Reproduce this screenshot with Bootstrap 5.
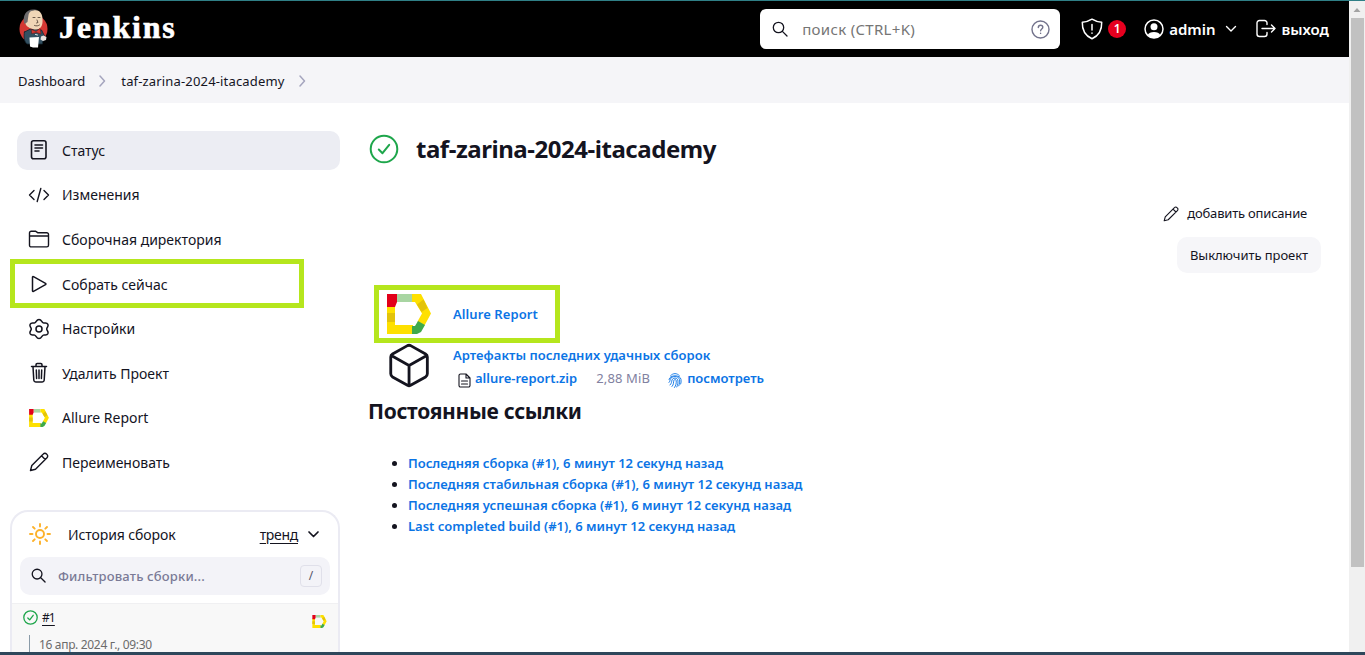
<!DOCTYPE html>
<html lang="ru">
<head>
<meta charset="utf-8">
<meta name="viewport" content="width=device-width, initial-scale=1">
<title>taf-zarina-2024-itacademy [Jenkins]</title>
<link href="https://cdn.jsdelivr.net/npm/bootstrap@5.3.0/dist/css/bootstrap.min.css" rel="stylesheet">
<style>
body{font-family:"Noto Sans","Open Sans",sans-serif;font-size:14px;line-height:21px;color:#14141f;background:#fff}
svg{display:block;flex:none;fill:none;stroke:currentColor;stroke-linecap:round;stroke-linejoin:round}
svg.flat{stroke:none}
.tone-green{color:#1ea64b}
.tone-sun{color:#fdb22b}
.tone-muted{color:#73738c}
.tone-pale{color:#a5a5be}
.tone-link{color:#0b74e5}
a{color:#0b74e5;text-decoration:none}
.shell{height:655px;border-top:1px solid #2f7f86;border-bottom:3px solid #2e475b}
.topbar{height:56px;background:#000;color:#fff;padding:0 20px 0 18px}
.brand{font-family:"Liberation Serif",serif;font-weight:700;font-size:32px;line-height:40px;letter-spacing:1.8px;-webkit-text-stroke:.6px #fff;margin:-4px 0 0 9px}
.searchbox{width:300px;height:40px;border-radius:6px;background:#fff;padding:0 10px 0 12px;color:#14141f}
.searchbox .hint{font-size:15px;letter-spacing:.32px;color:#757575;margin-left:14px}
.top-item{font-size:15px;font-weight:600}
.avatar{margin:0 4px 0 15px}
.caret{margin:0 15px 0 7px}
.alarm{width:18px;height:18px;border-radius:9px;background:#e6001f;font-size:12px;line-height:18px;font-weight:600}
.crumbs{height:46px;background:#f5f5f8;padding:2px 0 0 18px;font-size:13px}
.crumb-job{letter-spacing:.16px}
.side{width:340px;padding-top:28px}
.task{height:38.6px;margin:0 0 6px 17px;padding-left:11px;border-radius:10px}
.task.current{background:#ecedf3}
.task svg{margin-right:12px}
.marked::after{content:"";position:absolute;border:5px solid #b5e61d}
.build-now::after{left:-7px;top:-6px;width:294px;height:49px}
.history{margin:28px 0 0 10px;width:330px;height:160px;border:2px solid #ebebf3;border-bottom:0;border-radius:18px 18px 0 0}
.history-head{height:45px;padding:0 18px 0 17px}
.history-title{margin-left:17px;letter-spacing:-.1px}
.trend{letter-spacing:-.3px;color:#14141f;text-decoration:underline;text-underline-offset:3px}
.filter{height:38px;margin:0 8px;border-radius:10px;background:#f3f3f8;padding:0 8px 0 11px}
.filter-hint{color:#7a7a96;font-weight:500;font-size:13px;letter-spacing:.17px;padding-top:2px}
.slash{width:22px;height:22px;border:1px solid #e0e0ea;border-radius:4px;font-size:12px;line-height:20px;color:#555568}
.builds{margin-top:8px;height:80px;padding:3px 11px 0 11px;background:#f8f8f8;border-top:1px solid #f0f0f2;font-size:12px}
.build-no{letter-spacing:-.9px;color:#14141f;text-decoration:underline;text-underline-offset:3px}
.when{border-left:1px solid #8a9ba8;margin:7px 0 0 6px;padding:3px 0 20px 9px;line-height:14px;color:#6b6b6b;letter-spacing:-.33px}
.content-pane{padding:28px 28px 0 28px}
h1{font-size:24px;letter-spacing:-.46px;font-weight:700;line-height:36px}
h2{font-size:21px;letter-spacing:-.32px;font-weight:700;line-height:28px;margin-top:6px}
.quiet{font-size:13px;letter-spacing:-.2px}
.describe{margin:36px 14px 0 0}
.off{height:36px;margin-top:13px;border-radius:10px;background:#f6f6f9;padding:0 13px;line-height:36px;letter-spacing:-.06px}
.links,.perma{font-size:13px;font-weight:600}
.report{height:58px;width:186px;margin:12px 0 0 6px;padding-left:13px}
.report::after{inset:0}
.report svg{margin-right:22px}
.report a{letter-spacing:.08px}
.cube{margin:0 22px 0 17px}
.artifact-title{letter-spacing:.05px;margin:1px 0 2px}
.perma{padding-left:40px;margin:28px 0 0}
.size{font-weight:400;color:#8181a0;letter-spacing:.15px;margin:0 18px 0 19px}
.look{margin-left:5px}
.bar{width:16px;background:#f0f0f0}
.bar svg{color:#a3a3a3}
.thumb{width:13px;height:549px;background:#c1c1c1;margin-left:2px}
</style>
<script src="https://cdn.jsdelivr.net/npm/bootstrap@5.3.0/dist/js/bootstrap.bundle.min.js"></script>
</head>
<body class="overflow-hidden">
<svg width="0" height="0" class="d-none">
  <symbol id="allure" viewBox="0 0 44 40">
    <g stroke="none">
      <path fill="#fee000" d="M0 10h8v21h18v9H0z"/>
      <path fill="#a8d5a2" d="M10 0h15v8H10z"/>
      <path fill="#e2001a" d="M0 0h10v8L8 13H0z"/>
      <path fill="#fee000" d="M25 0h9l10 19.500-6.500 12-7-4L35 19.500 28 8h-3z"/>
      <path fill="#e3c30a" d="M0 19h8v9H0zM36.500 5.500l4 8.500-6 4-4.500-7.500z"/>
      <path fill="#3eaa4a" d="M31 27l7 4-4 7-4 2h-5v-8h3z"/>
    </g>
  </symbol>
  <symbol id="pencil" viewBox="0 0 20 20">
    <path stroke-width="1.400" d="M1.500 18.500l1.300-5L14.300 2a2.200 2.200 0 0 1 3.200 0l.5.500a2.200 2.200 0 0 1 0 3.200L6.500 17.200zM12.500 3.800l3.700 3.700"/>
  </symbol>
  <symbol id="glass" viewBox="0 0 16 16"><circle cx="6.500" cy="6.500" r="5.200"/><path d="M10.400 10.400L15 15"/></symbol>
</svg>
<div class="shell d-flex overflow-hidden">
  <div class="flex-grow-1 overflow-hidden">
    <header class="topbar d-flex align-items-center">
      <svg class="flat" width="32" height="42" viewBox="0 0 32 42">
        <circle cx="15.500" cy="21" r="14" fill="#d33833"/>
        <path d="M6.500 24l6-3 11 1 4 8-3 4v2H9c-3-3-3.500-7-2.500-12z" fill="#335061" stroke="#12232e" stroke-width=".8"/>
        <path d="M7.500 13c0-8 4-11 9.500-11 5 0 7.500 4 7.500 9 .5 6-1.500 10.500-6.500 10.500-4 0-9.500-2.500-10.500-5.500z" fill="#f0d6b7"/>
        <path d="M6.500 16C4 8 8 1.500 15 1.500c2.500 0 4 .3 5 1-4.500-.5-8.500 0-9.500 4.500L9.500 14z" fill="#6d6b6d"/>
        <path d="M15 9.500h2M20 9.500h2M19 12l1 2.500-1.500.5M16.500 17.500c2 .8 4 .3 5-.5" stroke="#49392f" stroke-width=".8"/>
        <path d="M13.500 21.500l4.500 2L22 20.500l1 5.500-4.500-1.500-4.500 1z" fill="#d33833" stroke="#6e1210" stroke-width=".5"/>
        <path d="M11.500 29.500l9.500-.5-1 10.500H15l-3-1z" fill="#fff"/>
        <path d="M23 28.500l2.500-1 3 1.500-.5 3-3 1-2.500-1.500z" fill="#e9e3dd"/>
        <path d="M17.500 26.500l2 .5" stroke="#dfe6ea" stroke-width="1"/>
      </svg>
      <div class="brand">Jenkins</div>
      <div class="searchbox d-flex align-items-center ms-auto">
        <svg width="16" height="16" stroke-width="1.300"><use href="#glass"/></svg>
        <span class="hint flex-grow-1">поиск (CTRL+K)</span>
        <svg class="tone-muted" width="19" height="19" viewBox="0 0 19 19" stroke-width="1.400"><circle cx="9.500" cy="9.500" r="8.500"/><path d="M7.300 7.500c0-3 4.500-2.800 4.500-.2 0 1.700-2.200 1.700-2.200 3.500M9.600 13.200v.2"/></svg>
      </div>
      <div class="top-item d-flex align-items-center flex-shrink-0">
        <svg class="ms-3" width="32" height="22" viewBox="0 0 32 22" stroke-width="1.500"><path d="M16 1.200c3 1.900 6 2.800 9.700 3C26 12 23 17.500 16 20.800 9 17.500 6 12 6.300 4.200 10 4 13 3.100 16 1.200z"/><path d="M16 6.500v5.500M16 15v.2"/></svg>
        <span class="alarm text-center">1</span>
        <svg class="avatar" width="24" height="22" viewBox="0 0 24 22" stroke-width="1.500"><circle cx="13" cy="11" r="9"/><g fill="currentColor" stroke="none"><circle cx="13" cy="8.700" r="3.500"/><path d="M6.800 17c1-4 11.400-4 12.400 0-3.300 4-9.100 4-12.400 0z"/></g></svg>
        <span>admin</span>
        <svg class="caret" width="14" height="10" viewBox="0 0 14 10" stroke-width="1.400"><path d="M3.500 2.500L8 7l4.500-4.500"/></svg>
        <svg width="26" height="20" viewBox="0 0 26 20" stroke-width="1.400"><path d="M15 5.500V4a2.500 2.500 0 0 0-2.500-2.500h-5A2.500 2.500 0 0 0 5 4v11a2.500 2.500 0 0 0 2.500 2.500h5A2.500 2.500 0 0 0 15 15v-1.500M10 9.500h13M19.500 6L23 9.500 19.500 13"/></svg>
        <span class="ms-1">выход</span>
      </div>
    </header>
    <nav class="crumbs d-flex align-items-center">
      <span>Dashboard</span>
      <svg class="tone-pale mx-3" width="4" height="10" viewBox="0 0 4 10" overflow="visible" stroke-width="1.500"><path d="M-1 0l4.500 5L-1 10"/></svg>
      <span class="crumb-job">taf-zarina-2024-itacademy</span>
      <svg class="tone-pale mx-3" width="4" height="10" viewBox="0 0 4 10" overflow="visible" stroke-width="1.500"><path d="M-1 0l4.500 5L-1 10"/></svg>
    </nav>
    <div class="d-flex">
      <aside class="side flex-shrink-0">
        <div class="task current d-flex align-items-center"><svg width="22" height="22" viewBox="0 0 22 22" stroke-width="1.600"><rect x="3.500" y="1.800" width="14.500" height="18" rx="2"/><path d="M7 6h7.500M7 9h7.500M7 12h4"/></svg>Статус</div>
        <div class="task d-flex align-items-center"><svg width="22" height="22" viewBox="0 0 22 22" stroke-width="1.400"><path d="M6 6.500L1.500 11 6 15.500M16 6.500l4.500 4.500-4.500 4.500M12.800 4.500l-3.600 13"/></svg>Изменения</div>
        <div class="task d-flex align-items-center"><svg width="22" height="22" viewBox="0 0 22 22" stroke-width="1.400"><path d="M1.500 7.500V5A1.700 1.700 0 0 1 3.200 3.300h4.600l2.200 1.500h8.800a1.700 1.700 0 0 1 1.700 1.700v10.700a1.700 1.700 0 0 1-1.700 1.700H3.200a1.700 1.700 0 0 1-1.700-1.700zM1.500 8h19"/></svg>Сборочная директория</div>
        <div class="task marked build-now d-flex align-items-center position-relative"><svg width="22" height="22" viewBox="0 0 22 22" stroke-width="1.500"><path d="M4.500 4.200v13.600q0 1 1 .5L17.500 11.700q.8-.7 0-1.300L5.500 3.700q-1-.5-1 .5z"/></svg>Собрать сейчас</div>
        <div class="task d-flex align-items-center"><svg width="22" height="22" viewBox="0 0 22 22" stroke-width="1.500"><circle cx="11" cy="11" r="3"/><path d="M11 1.500c2.800 0 2.500 2.800 4.300 3.400 1.700.6 3.400-.9 4.600 1.500 1 2.200-1.200 2.900-1.200 4.600s2.200 2.400 1.200 4.600c-1.200 2.400-2.900.9-4.600 1.500-1.800.6-1.500 3.400-4.300 3.400s-2.500-2.800-4.300-3.400c-1.700-.6-3.400.9-4.600-1.500-1-2.200 1.200-2.900 1.200-4.600S1.100 8.600 2.100 6.400C3.300 4 5 5.500 6.700 4.900 8.500 4.300 8.200 1.500 11 1.500z"/></svg>Настройки</div>
        <div class="task d-flex align-items-center"><svg width="22" height="22" viewBox="0 0 22 22" stroke-width="1.500"><path d="M3.500 4.500h15M8 4V2.700A1.200 1.200 0 0 1 9.200 1.500h3.600A1.200 1.200 0 0 1 14 2.700V4M5 4.700l.8 13.500a2 2 0 0 0 2 1.800h6.400a2 2 0 0 0 2-1.800L17 4.700M8.300 8l.3 8.500M11 8v8.500M13.700 8l-.3 8.500"/></svg>Удалить Проект</div>
        <div class="task d-flex align-items-center"><svg width="22" height="18"><use href="#allure"/></svg>Allure Report</div>
        <div class="task d-flex align-items-center"><svg width="22" height="20"><use href="#pencil"/></svg>Переименовать</div>
        <section class="history">
          <div class="history-head d-flex align-items-center">
            <svg class="tone-sun" width="22" height="22" viewBox="0 0 22 22" stroke-width="1.900"><circle cx="11" cy="11" r="4"/><path d="M11 1v2.500M11 18.500V21M1 11h2.500M18.500 11H21M4 4l1.700 1.700M16.300 16.300L18 18M4 18l1.700-1.700M16.300 5.700L18 4"/></svg>
            <span class="history-title me-auto">История сборок</span>
            <a class="trend me-2" href="#">тренд</a>
            <svg width="14" height="10" viewBox="0 0 14 10" stroke-width="1.700"><path d="M3 3L7.500 7.500 12 3"/></svg>
          </div>
          <div class="filter d-flex align-items-center">
            <svg width="15" height="15" stroke-width="1.400"><use href="#glass"/></svg>
            <span class="filter-hint flex-grow-1 ms-2 ps-1">Фильтровать сборки...</span>
            <span class="slash text-center">/</span>
          </div>
          <div class="builds">
            <div class="d-flex align-items-center">
              <svg class="tone-green" width="15" height="15" viewBox="0 0 15 15" stroke-width="1.300"><circle cx="7.500" cy="7.500" r="6.700"/><path d="M4.800 8l1.900 1.900 3.500-4.600"/></svg>
              <a class="build-no ms-1 me-auto" href="#">#1</a>
              <svg class="mt-2" width="15" height="13"><use href="#allure"/></svg>
            </div>
            <div class="when">16 апр. 2024 г., 09:30</div>
          </div>
        </section>
      </aside>
      <main class="content-pane flex-grow-1">
        <div class="d-flex align-items-center">
          <svg class="tone-green" width="32" height="32" viewBox="0 0 32 32" stroke-width="2"><circle cx="16" cy="16" r="13.300"/><path d="M10.800 16.500l3.700 3.700 6.700-8.400"/></svg>
          <h1 class="mb-0 ms-3">taf-zarina-2024-itacademy</h1>
        </div>
        <div class="quiet d-flex flex-column align-items-end">
          <div class="describe d-flex align-items-center"><svg class="me-2" width="16" height="16"><use href="#pencil"/></svg>добавить описание</div>
          <div class="off">Выключить проект</div>
        </div>
        <div class="links">
          <div class="report marked d-flex align-items-center position-relative"><svg width="44" height="40"><use href="#allure"/></svg><a href="#">Allure Report</a></div>
          <div class="d-flex align-items-center">
            <svg class="cube" width="46" height="46" viewBox="1 1 44 44" stroke-width="2.700"><path d="M22.500 3.500q1.500-.7 3 0l14.300 8q1.700 1 1.700 3v16q0 2-1.700 3l-14.300 8q-1.500.7-3 0l-14.300-8q-1.700-1-1.700-3v-16q0-2 1.700-3zM7 13l17 9.500L41 13M24 22.500V42"/></svg>
            <div>
              <a class="artifact-title d-block" href="#">Артефакты последних удачных сборок</a>
              <div class="d-flex align-items-center">
                <svg class="ms-1 me-1 mt-1" width="14" height="15" viewBox="-1 0 14 15" stroke-width="1.100"><path d="M1 2.500A1.500 1.500 0 0 1 2.500 1H8l4 4v7.500a1.500 1.500 0 0 1-1.500 1.500h-8A1.500 1.500 0 0 1 1 12.500zM8 1v4h4M3.500 8h6M3.500 11h6"/></svg>
                <a href="#">allure-report.zip</a>
                <span class="size">2,88 MiB</span>
                <svg class="tone-link mt-1" width="14" height="15" viewBox="0 0 14 15" stroke-width=".9"><path d="M2.500 2.800C5-.2 9-.2 11.500 2.800M1 6.500c.5-5 11.500-5 12 0 .2 2 .2 3-.3 4.500M1 9.500c1.200-1 .8-2 1.300-3.200 1-3.700 8.400-3.700 9.200.2.400 2 0 4.500-.7 6.300M2 12c1.800-1.500 1.500-3.500 2-5 .8-2.500 5.200-2.500 5.800 0 .5 2.500 0 5-1 7M4 13.500C6 11.500 5.300 9 5.800 7.500c.4-1.200 2.200-1.200 2.400 0 .3 2.500-.2 5-1.700 7"/></svg>
                <a class="look" href="#">посмотреть</a>
              </div>
            </div>
          </div>
        </div>
        <h2 class="mb-0 pt-0 mt-2">Постоянные ссылки</h2>
        <ul class="perma">
          <li><a href="#">Последняя сборка (#1), 6 минут 12 секунд назад</a></li>
          <li><a href="#">Последняя стабильная сборка (#1), 6 минут 12 секунд назад</a></li>
          <li><a href="#">Последняя успешная сборка (#1), 6 минут 12 секунд назад</a></li>
          <li><a href="#">Last completed build (#1), 6 минут 12 секунд назад</a></li>
        </ul>
      </main>
    </div>
  </div>
  <div class="bar flex-shrink-0">
    <svg class="flat" width="16" height="17" viewBox="0 0 16 17"><path fill="currentColor" d="M4.500 11L8 7l3.500 4z"/></svg>
    <div class="thumb"></div>
  </div>
</div>
</body>
</html>
